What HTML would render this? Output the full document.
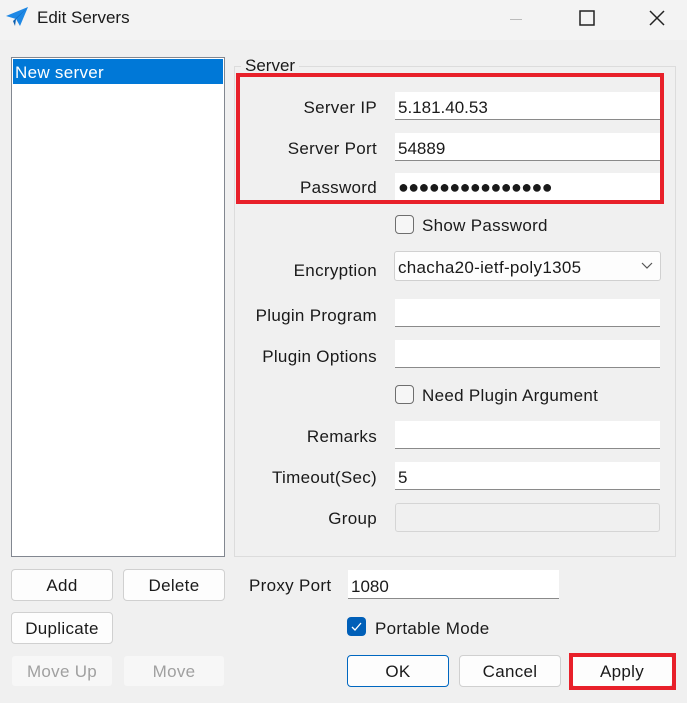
<!DOCTYPE html>
<html><head><meta charset="utf-8"><style>
*{box-sizing:border-box;margin:0;padding:0}
body{width:687px;height:703px;background:#f0f0f0;font-family:"Liberation Sans",sans-serif;font-size:17px;color:#1a1a1a;position:relative;overflow:hidden}
.a{position:absolute}
.lbl{position:absolute;text-align:right;width:200px;left:177px;line-height:20px;letter-spacing:0.3px}
.in{position:absolute;left:395px;width:265px;height:28px;background:#fff;border-bottom:1px solid #8a8a8a;padding-left:3px;line-height:32px}
.btn{position:absolute;height:32px;background:#fdfdfd;border:1px solid #d0d0d0;border-radius:4px;text-align:center;line-height:32px;letter-spacing:0.3px}
.dis{background:#f7f7f7;border-color:#f0f0f0;color:#a0a0a0}
.cb{position:absolute;width:19px;height:19px;border:1px solid #6e6e6e;border-radius:4px;background:#f6f6f6}
</style></head><body>
<div class="a" style="left:0;top:0;width:687px;height:40px;background:#f3f3f3"></div>
<svg class="a" style="left:5px;top:6px" width="24" height="22" viewBox="0 0 24 22"><path d="M1 10 L23 1 L15 20 L11 13 Z" fill="#1e88e5"/><path d="M11 13 L23 1 L8 15 L10 20Z" fill="#0d5fb0"/></svg>
<div class="a" style="left:37px;top:8px;font-size:17px">Edit Servers</div>
<div class="a" style="left:510px;top:19px;width:12px;height:1px;background:#bbb"></div>
<svg class="a" style="left:579px;top:10px" width="16" height="16"><rect x="1" y="1" width="14" height="14" fill="none" stroke="#222" stroke-width="1.5"/></svg>
<svg class="a" style="left:649px;top:10px" width="16" height="16"><path d="M1 1L15 15M15 1L1 15" stroke="#222" stroke-width="1.5"/></svg>

<div class="a" style="left:11px;top:57px;width:214px;height:500px;background:#fff;border:1px solid #828790"></div>
<div class="a" style="left:13px;top:59px;width:210px;height:25px;background:#0078d7;color:#fff;padding-left:2px;line-height:28px;letter-spacing:0.3px">New server</div>

<div class="a" style="left:234px;top:66px;width:442px;height:491px;border:1px solid #dcdcdc"></div>
<div class="a" style="left:241px;top:57px;background:#f0f0f0;padding:0 4px;line-height:18px">Server</div>

<div class="lbl" style="top:98px">Server IP</div><div class="in" style="top:92px">5.181.40.53</div>
<div class="lbl" style="top:139px">Server Port</div><div class="in" style="top:133px">54889</div>
<div class="lbl" style="top:178px">Password</div><div class="in" style="top:173px;font-size:18px;letter-spacing:-0.6px;line-height:28px">●●●●●●●●●●●●●●●</div>
<div class="a" style="left:236px;top:73px;width:428px;height:131px;border:4px solid #e8202a"></div>

<div class="cb" style="left:395px;top:215px"></div><div class="a" style="left:422px;top:216px;letter-spacing:0.3px">Show Password</div>
<div class="lbl" style="top:261px">Encryption</div>
<div class="a" style="left:394px;top:251px;width:267px;height:30px;background:#fdfdfd;border:1px solid #d0d0d0;border-radius:3px;padding-left:3px;line-height:32px;letter-spacing:0.3px">chacha20-ietf-poly1305</div>
<svg class="a" style="left:641px;top:262px" width="12" height="8"><path d="M1 1L6 6L11 1" fill="none" stroke="#555" stroke-width="1.2"/></svg>
<div class="lbl" style="top:306px">Plugin Program</div><div class="in" style="top:299px"></div>
<div class="lbl" style="top:347px">Plugin Options</div><div class="in" style="top:340px"></div>
<div class="cb" style="left:395px;top:385px"></div><div class="a" style="left:422px;top:386px;letter-spacing:0.3px">Need Plugin Argument</div>
<div class="lbl" style="top:427px">Remarks</div><div class="in" style="top:421px"></div>
<div class="lbl" style="top:468px">Timeout(Sec)</div><div class="in" style="top:462px">5</div>
<div class="lbl" style="top:509px">Group</div><div class="a" style="left:395px;top:503px;width:265px;height:29px;background:#f0f0f0;border:1px solid #d5d5d5;border-radius:3px"></div>

<div class="btn" style="left:11px;top:569px;width:102px">Add</div>
<div class="btn" style="left:123px;top:569px;width:102px">Delete</div>
<div class="btn" style="left:11px;top:612px;width:102px">Duplicate</div>
<div class="btn dis" style="left:11px;top:655px;width:102px">Move Up</div>
<div class="btn dis" style="left:123px;top:655px;width:102px">Move</div>

<div class="a" style="left:249px;top:576px;letter-spacing:0.3px">Proxy Port</div>
<div class="a" style="left:348px;top:570px;width:211px;height:29px;background:#fff;border-bottom:1px solid #8a8a8a;padding-left:3px;line-height:33px">1080</div>
<div class="a" style="left:347px;top:617px;width:19px;height:19px;background:#005fb8;border-radius:4px"></div>
<svg class="a" style="left:350px;top:621px" width="13" height="11"><path d="M2 6L5 9L11 2" fill="none" stroke="#fff" stroke-width="1.3"/></svg>
<div class="a" style="left:375px;top:619px;letter-spacing:0.3px">Portable Mode</div>

<div class="btn" style="left:347px;top:655px;width:102px;border-color:#0067c0">OK</div>
<div class="btn" style="left:459px;top:655px;width:102px">Cancel</div>
<div class="btn" style="left:571px;top:655px;width:102px">Apply</div>
<div class="a" style="left:569px;top:653px;width:107px;height:37px;border:4px solid #e8202a"></div>
</body></html>
